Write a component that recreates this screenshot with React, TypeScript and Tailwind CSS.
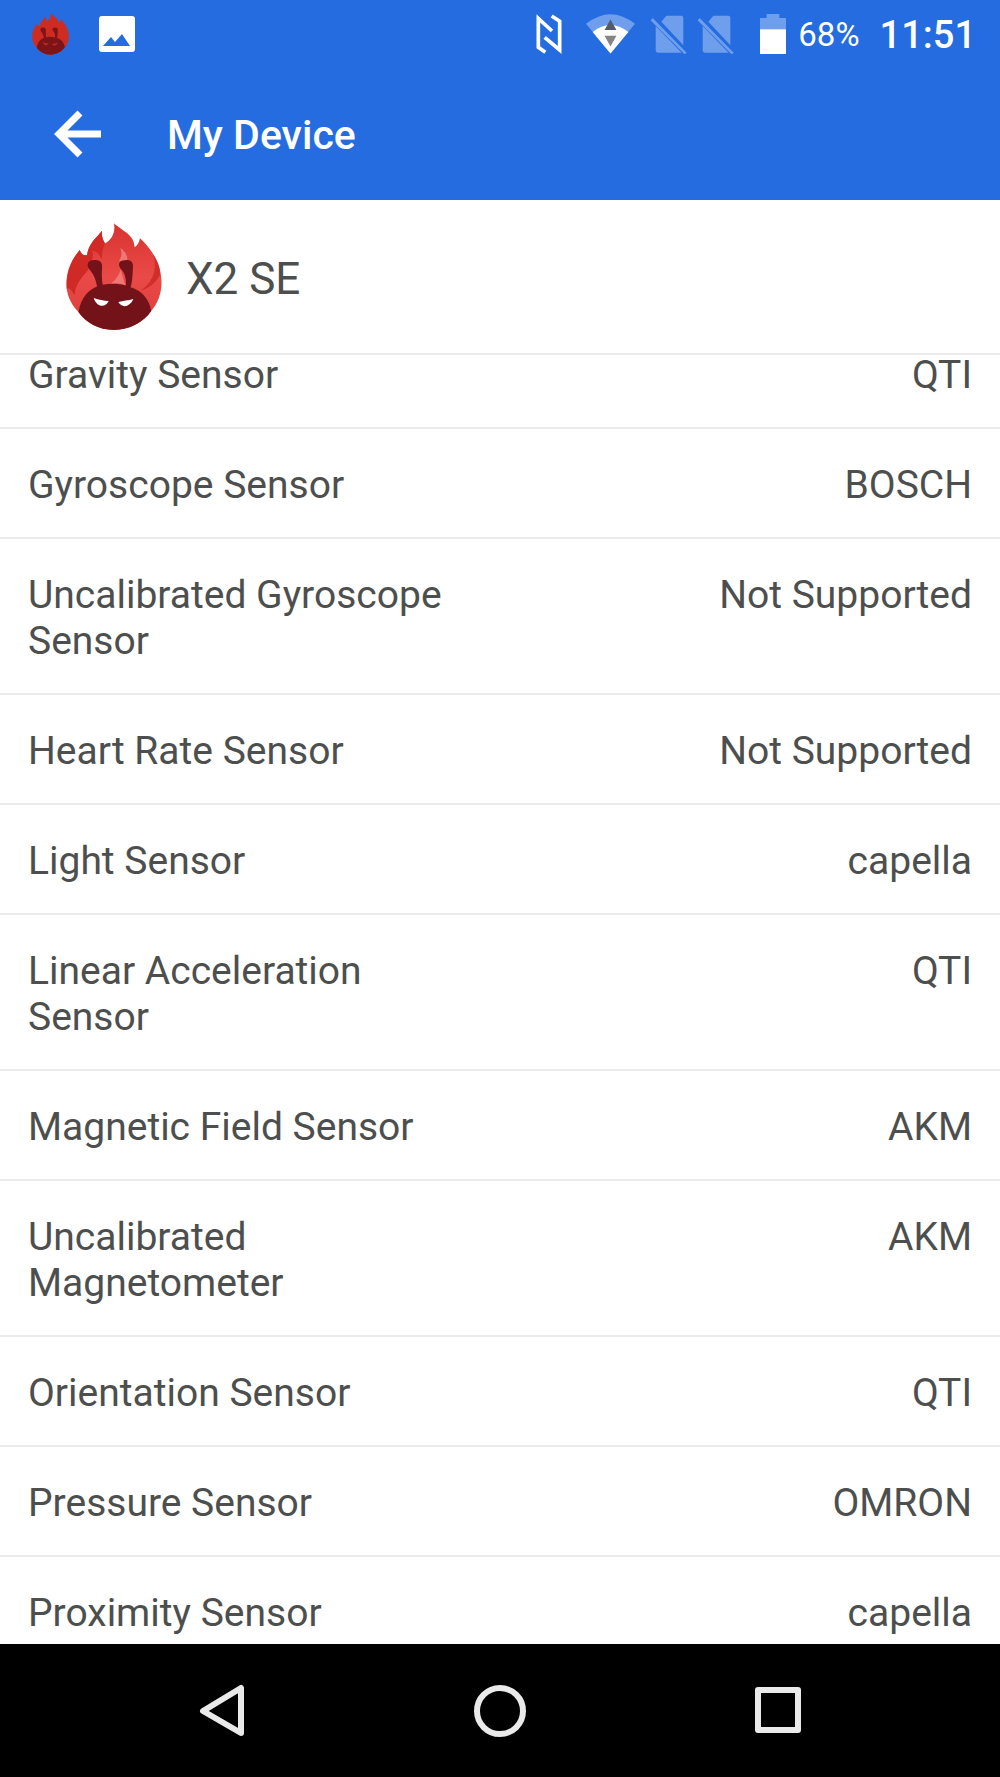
interface Sensor {
  name: string;
  vendor: string;
}

const sensors: Sensor[] = [
  { name: 'Gravity Sensor', vendor: 'QTI' },
  { name: 'Gyroscope Sensor', vendor: 'BOSCH' },
  { name: 'Uncalibrated Gyroscope Sensor', vendor: 'Not Supported' },
  { name: 'Heart Rate Sensor', vendor: 'Not Supported' },
  { name: 'Light Sensor', vendor: 'capella' },
  { name: 'Linear Acceleration Sensor', vendor: 'QTI' },
  { name: 'Magnetic Field Sensor', vendor: 'AKM' },
  { name: 'Uncalibrated Magnetometer', vendor: 'AKM' },
  { name: 'Orientation Sensor', vendor: 'QTI' },
  { name: 'Pressure Sensor', vendor: 'OMRON' },
  { name: 'Proximity Sensor', vendor: 'capella' },
];

const flamePath =
  'M194 56C210 72 240 85 250 105C256 118 255 124 256 128C266 122 270 112 272 101C300 127 337 170 337 234C337 268 325 297 306 320C282 355 240 377 194 377C149 377 108 355 87 323C62 297 51 270 51 238C51 193 70 160 91 136C94 148 103 154 113 152C117 117 138 103 158 78C156 96 161 107 167 117C186 105 199 87 194 56Z';

const bunnyPath =
  'M87 323C95 275 122 254 143 246C138 219 132 209 118 192C111 180 116 168 129 167C150 163 160 172 158 190C157 210 157 224 160 241C184 236 209 238 230 243C231 219 226 204 213 191C204 177 212 167 226 167C244 163 253 173 251 189C250 211 249 233 244 248C278 258 300 284 306 320C282 355 240 377 194 377C149 377 108 355 87 323Z';

const eyesPath = 'M133 281C148 287 163 289 178 290C170 309 143 312 133 281ZM252 284C237 288 222 290 207 293C217 311 241 310 252 284Z';

function FlameLogo() {
  return (
    <svg viewBox="50 55 288 322" className="h-[107px] w-24" aria-hidden="true">
      <defs>
        <linearGradient id="flame" x1="0" y1="0" x2="0" y2="1">
          <stop offset="0" stopColor="#d83330" />
          <stop offset="0.5" stopColor="#ea4a47" />
          <stop offset="1" stopColor="#dc3d39" />
        </linearGradient>
      </defs>
      <path fill="url(#flame)" d={flamePath} />
      <path
        fill="#cf2a25"
        d="M91 136C94 148 103 154 113 152C117 117 138 103 158 78C156 96 161 107 167 117C160 130 158 147 157 165C149 146 139 139 127 138C136 155 126 169 118 190C110 213 80 225 76 272C64 258 60 245 52 255C48 205 67 165 91 136Z"
      />
      <path fill="#d12d2a" d="M312 150C330 178 334 200 332 212C320 236 296 252 274 259C309 234 326 200 312 150Z" />
      <path fill="#ef7774" d="M213 130C231 143 238 158 232 180L209 168C218 156 218 144 213 130Z" />
      <path fill="#ef7774" d="M214 196L228 242C209 235 196 237 184 239C194 230 207 218 214 196Z" />
      <path fill="#731319" d={bunnyPath} />
      <path fill="#fff" d={eyesPath} />
    </svg>
  );
}

// Flat version for the notification area
function FlameBadge() {
  return (
    <svg viewBox="50 55 288 322" className="h-[42px] w-[37px]" aria-hidden="true">
      <path fill="#cf2c21" d={flamePath} />
      <path fill="#7d1417" d={bunnyPath} />
      <path fill="#b52a2c" d={eyesPath} />
    </svg>
  );
}

function NoSimIcon() {
  return (
    <svg viewBox="0 0 108 120" className="h-10 w-9" fill="#6f9eec" aria-hidden="true">
      <path d="M31 23L46 5H91Q97 5 97 12V94Z" />
      <path d="M14 36L92 116H21Q14 116 14 109Z" />
      <path d="M5 12L107 116L101 121L-1 19Z" />
    </svg>
  );
}

function StatusBar() {
  return (
    <div className="flex h-[68px] items-center justify-between pr-6 pl-8">
      <div className="flex items-center gap-[30px]">
        <FlameBadge />
        <svg viewBox="0 0 36 36" className="size-9" aria-hidden="true">
          <rect width="36" height="36" rx="3" fill="#fff" />
          <path fill="#246ce0" d="M4 30L12 21L16 26L23 18L31 30Z" />
        </svg>
      </div>
      <div className="flex items-center text-white">
        <svg viewBox="0 0 78 120" className="mr-6 h-10 w-[26px]" fill="none" stroke="currentColor" strokeWidth="11" aria-hidden="true">
          <path d="M28 115L7 100V13L48 51" />
          <path d="M47 6L71 22V108L26 70" />
        </svg>
        <svg viewBox="0 0 148 120" className="mr-4 h-10 w-[49px]" aria-hidden="true">
          <path fill="#6f9eec" d="M0 29Q74 -29 148 29L74 119Z" />
          <path fill="#fff" d="M20 54Q74 12 128 54L74 119Z" />
          <path fill="#555b66" d="M74 16L92 48H56Z" />
          <path fill="#858585" d="M56 65H92L74 98Z" />
        </svg>
        <div className="mr-[26px] flex gap-[11px]">
          <NoSimIcon />
          <NoSimIcon />
        </div>
        <svg viewBox="0 0 78 120" className="mr-3 h-10 w-[26px]" aria-hidden="true">
          <path fill="#6f9eec" d="M0 12H20V0H58V12H78V48H0Z" />
          <path fill="#fff" d="M0 46H78V121H0Z" />
        </svg>
        <span className="mr-5 pt-0.5 text-[33px] leading-10">68%</span>
        <time className="pt-0.5 text-[38px] leading-10 font-medium">11:51</time>
      </div>
    </div>
  );
}

function AppBar() {
  return (
    <header className="flex h-[132px] items-center gap-[65px] pl-[54px] text-white">
      <button type="button" aria-label="Back">
        <svg viewBox="0 0 48 48" className="size-12" fill="none" stroke="currentColor" strokeWidth="7" aria-hidden="true">
          <path d="M26 3L5 24L26 45M5 24H47" />
        </svg>
      </button>
      <h1 className="pt-0.5 text-[41px] leading-12 font-medium">My Device</h1>
    </header>
  );
}

function SensorTable() {
  return (
    <table className="-mt-9 w-full table-fixed text-[39px] leading-[46px]">
      <tbody>
        {sensors.map((sensor) => (
          <tr key={sensor.name} className="border-b-2 border-[#ebebeb] align-top">
            <th scope="row" className="pt-[33px] pr-8 pb-[29px] pl-7 text-left font-normal">
              {sensor.name}
            </th>
            <td className="pt-[33px] pr-7 pb-[29px] text-right">{sensor.vendor}</td>
          </tr>
        ))}
      </tbody>
    </table>
  );
}

function NavigationBar() {
  return (
    <nav className="flex h-[133px] shrink-0 items-center justify-center gap-[225px] bg-black text-[#eaeaea]">
      <button type="button" aria-label="Back">
        <svg viewBox="0 0 52 54" className="h-[54px] w-[52px]" fill="none" stroke="currentColor" strokeWidth="6" strokeLinejoin="round" aria-hidden="true">
          <path d="M44 4V49L6 27Z" />
        </svg>
      </button>
      <button type="button" aria-label="Home">
        <svg viewBox="0 0 52 52" className="size-[52px]" fill="none" stroke="currentColor" strokeWidth="6" aria-hidden="true">
          <circle cx="26" cy="26" r="23" />
        </svg>
      </button>
      <button type="button" aria-label="Recent apps">
        <svg viewBox="0 0 52 52" className="size-[52px]" fill="none" stroke="currentColor" strokeWidth="6" strokeLinejoin="round" aria-hidden="true">
          <rect x="7" y="5" width="40" height="40" />
        </svg>
      </button>
    </nav>
  );
}

export default function App() {
  return (
    <div className="flex h-screen flex-col bg-white font-[Roboto,sans-serif] text-[#4d4f4e]">
      <div className="shrink-0 bg-[#246ce0]">
        <StatusBar />
        <AppBar />
      </div>
      <section className="flex h-[155px] shrink-0 items-center gap-6 border-b-2 border-[#ebebeb] pl-[66px]">
        <FlameLogo />
        <h2 className="pt-1 text-[44px] leading-12">X2 SE</h2>
      </section>
      <main className="min-h-0 flex-1 overflow-hidden">
        <SensorTable />
      </main>
      <NavigationBar />
    </div>
  );
}
